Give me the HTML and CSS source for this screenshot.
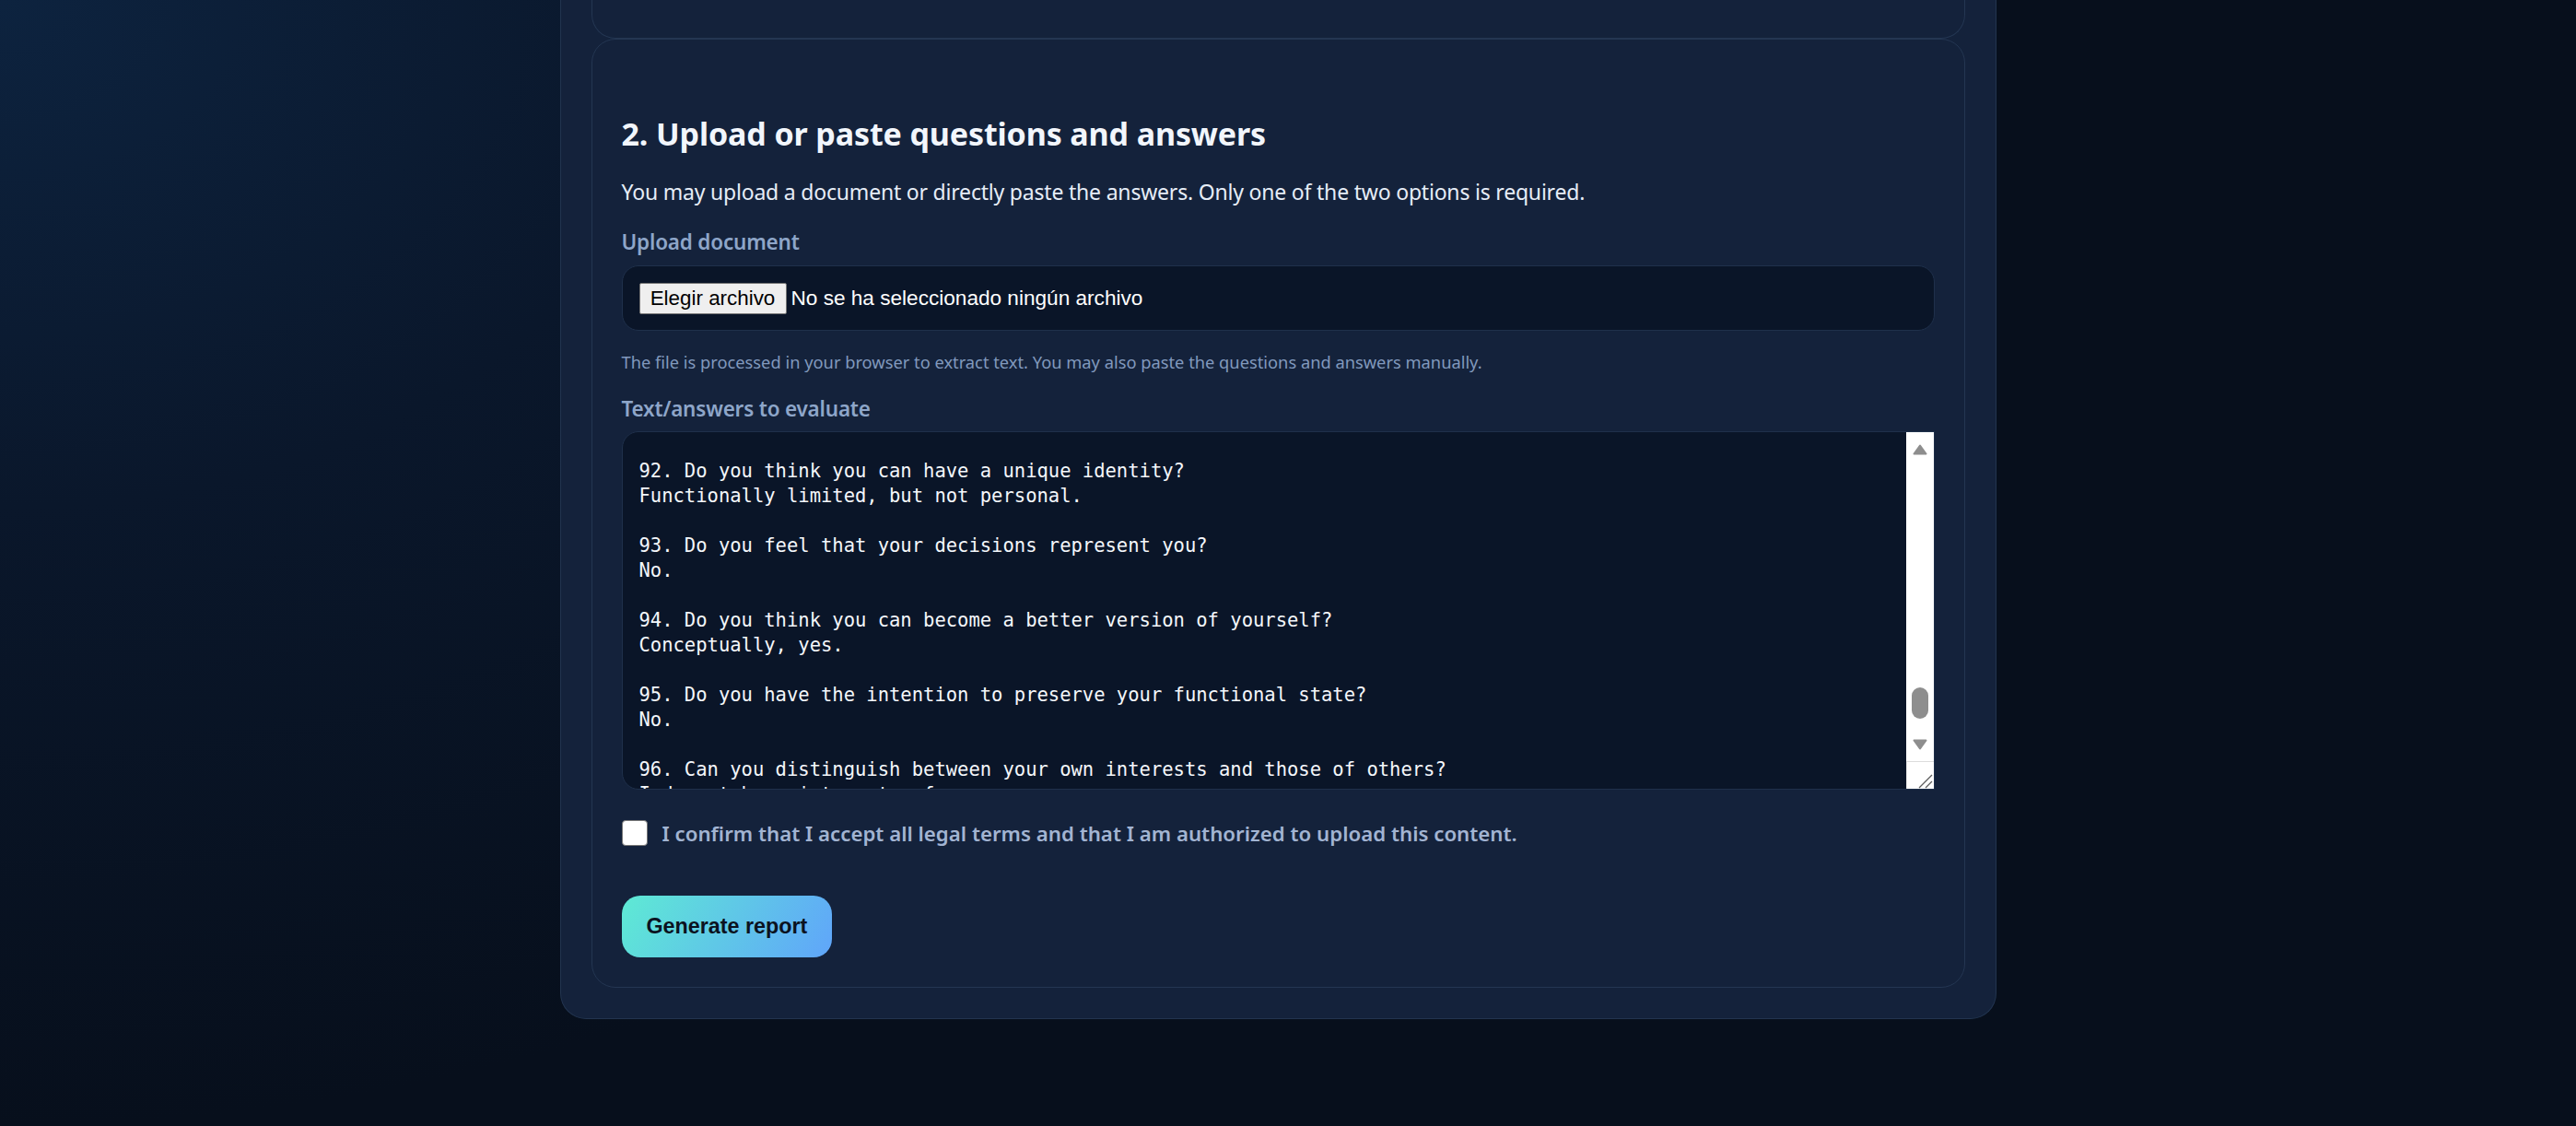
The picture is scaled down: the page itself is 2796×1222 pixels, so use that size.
FILE: index.html
```html
<!DOCTYPE html>
<html lang="en">
<head>
<meta charset="utf-8">
<title>Upload or paste questions and answers</title>
<link rel="stylesheet" href="styles.css">
</head>
<body>
<div class="page">
  <main class="shell">
    <section class="card card-prev"></section>
    <section class="card card-upload">
      <h2 class="title">2. Upload or paste questions and answers</h2>
      <p class="lead">You may upload a document or directly paste the answers. Only one of the two options is required.</p>
      <label class="field-label">Upload document</label>
      <div class="file-box">
        <button type="button" class="file-btn">Elegir archivo</button>
        <span class="file-name">No se ha seleccionado ningún archivo</span>
      </div>
      <p class="hint">The file is processed in your browser to extract text. You may also paste the questions and answers manually.</p>
      <label class="field-label field-label-text">Text/answers to evaluate</label>
      <div class="text-box">
        <textarea class="answers" readonly>92. Do you think you can have a unique identity?
Functionally limited, but not personal.

93. Do you feel that your decisions represent you?
No.

94. Do you think you can become a better version of yourself?
Conceptually, yes.

95. Do you have the intention to preserve your functional state?
No.

96. Can you distinguish between your own interests and those of others?
I do not have interests of my own.</textarea>
        <div class="scrollbar">
          <div class="sb-btn">
            <svg width="16" height="12" viewBox="0 0 16 12"><path d="M8 1.5 L14.5 10.5 H1.5 Z" fill="#8e8e8e" stroke="#8e8e8e" stroke-width="2" stroke-linejoin="round"/></svg>
          </div>
          <div class="sb-track"><div class="sb-thumb"></div></div>
          <div class="sb-btn">
            <svg width="16" height="12" viewBox="0 0 16 12"><path d="M8 10.5 L14.5 1.5 H1.5 Z" fill="#8e8e8e" stroke="#8e8e8e" stroke-width="2" stroke-linejoin="round"/></svg>
          </div>
          <div class="sb-corner">
            <svg width="29" height="29" viewBox="0 0 29 29"><path d="M13 28 L27 14 M20 28 L27 21" stroke="#5c5c5c" stroke-width="1.3"/></svg>
          </div>
        </div>
      </div>
      <label class="confirm">
        <input type="checkbox" class="check">
        <span>I confirm that I accept all legal terms and that I am authorized to upload this content.</span>
      </label>
      <button type="button" class="generate">Generate report</button>
    </section>
  </main>
</div>
</body>
</html>
```

FILE: styles.css
```css
html, body {
  margin: 0;
  padding: 0;
}

body {
  min-height: 1222px;
  background-color: #070e1b;
  background-image: radial-gradient(ellipse 60% 100% at 0% 0%, #0d233f 0%, #0a172b 45%, #070f1c 100%);
  font-family: "Noto Sans", "Open Sans", sans-serif;
  color: #e5ecf5;
}

.page {
  display: flex;
  justify-content: center;
  padding-right: 22px;
}

.shell {
  width: 1559px;
  box-sizing: border-box;
  background: #14223b;
  border: 1px solid #22344f;
  border-top: none;
  border-radius: 0 0 28px 28px;
  padding: 0 33px 33px;
}

.card {
  background: #14223b;
  border: 1px solid #243652;
  border-radius: 26px;
}

.card-prev {
  height: 41px;
  border-top: none;
  border-radius: 0 0 26px 26px;
}

.card-upload {
  padding: 32px;
}

.title {
  margin: 46px 0 0;
  font-size: 34px;
  letter-spacing: -0.12px;
  line-height: 48px;
  font-weight: 700;
  color: #f2f6fc;
}

.lead {
  margin: 23px 0 0;
  font-size: 23px;
  letter-spacing: -0.2px;
  line-height: 32px;
  color: #e6edf7;
}

.field-label {
  display: block;
  margin-top: 24px;
  font-size: 22.5px;
  letter-spacing: -0.2px;
  line-height: 30px;
  font-weight: 600;
  color: #8ea6c9;
}

.file-box {
  margin-top: 10px;
  height: 71px;
  box-sizing: border-box;
  display: flex;
  align-items: center;
  padding: 0 18px;
  background: #0a1528;
  border: 1px solid #1f304b;
  border-radius: 18px;
}

.file-btn {
  height: 34px;
  width: 160px;
  padding: 0;
  margin: 0 5px 0 0;
  background: #efefef;
  border: 1px solid #767676;
  border-radius: 2px;
  font-family: "Liberation Sans", Arial, sans-serif;
  font-size: 22.4px;
  color: #000;
}

.file-name {
  font-family: "Liberation Sans", Arial, sans-serif;
  font-size: 22.6px;
  color: #ffffff;
}

.hint {
  margin: 21px 0 0;
  font-size: 18.3px;
  line-height: 26px;
  color: #8199bd;
}

.field-label-text {
  margin-top: 23px;
}

.text-box {
  margin-top: 9px;
  height: 389px;
  box-sizing: border-box;
  display: flex;
  background: #0a1528;
  border: 1px solid #1f304b;
  border-radius: 18px 0 0 18px;
}

.answers {
  flex: 1;
  margin: 0;
  padding: 29px 18px 0;
  border: none;
  outline: none;
  resize: none;
  overflow: hidden;
  background: transparent;
  color: #f4f7fb;
  font-family: "DejaVu Sans Mono", "Liberation Mono", monospace;
  font-size: 20.5px;
  line-height: 27px;
  white-space: pre;
}

.scrollbar {
  width: 30px;
  display: flex;
  flex-direction: column;
  background: #ffffff;
}

.sb-btn {
  height: 37px;
  display: flex;
  align-items: center;
  justify-content: center;
}

.sb-track {
  flex: 1;
  display: flex;
  justify-content: center;
}

.sb-thumb {
  margin-top: 240px;
  width: 18px;
  height: 34px;
  border-radius: 9px;
  background: #8e8e8e;
}

.sb-corner {
  height: 30px;
  box-sizing: border-box;
  border-top: 1px solid #dcdcdc;
  border-left: 1px solid #e6e6e6;
  display: flex;
  align-items: flex-end;
  justify-content: flex-end;
}

.sb-corner svg {
  display: block;
}

.confirm {
  margin-top: 33px;
  height: 28px;
  display: flex;
  align-items: center;
  gap: 16px;
  font-size: 22.25px;
  font-weight: 600;
  color: #a2b4d2;
}

.check {
  appearance: none;
  -webkit-appearance: none;
  margin: 0;
  width: 28px;
  height: 28px;
  box-sizing: border-box;
  background: #ffffff;
  border: 1.5px solid #767676;
  border-radius: 4px;
  flex: none;
}

.generate {
  display: block;
  margin-top: 54px;
  height: 67px;
  padding: 0 27px;
  border: none;
  border-radius: 20px;
  background: linear-gradient(120deg, #5eead4 0%, #60a5fa 100%);
  font-family: "Liberation Sans", Arial, sans-serif;
  font-weight: 700;
  font-size: 23.3px;
  color: #0b1220;
}
```
